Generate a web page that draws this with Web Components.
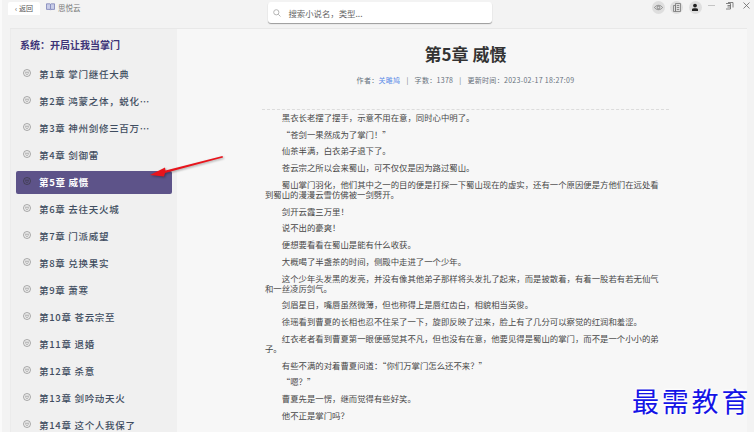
<!DOCTYPE html>
<html lang="zh-CN">
<head>
<meta charset="utf-8">
<title>思悦云</title>
<style>
  html, body { margin: 0; height: 432px; overflow: hidden; background: #f3f3f3; }
  body { font-family: "Noto Sans CJK SC", sans-serif; }
</style>
</head>
<body>
<reader-app>
  <top-bar slot="top"></top-bar>
  <chapter-list slot="side" heading="系统：开局让我当掌门">
    <chapter-item>第1章 掌门继任大典</chapter-item>
    <chapter-item>第2章 鸿蒙之体，蜕化成龙</chapter-item>
    <chapter-item>第3章 神州剑修三百万年前</chapter-item>
    <chapter-item>第4章 剑御雷</chapter-item>
    <chapter-item active>第5章 威慑</chapter-item>
    <chapter-item>第6章 去往天火城</chapter-item>
    <chapter-item>第7章 门派威望</chapter-item>
    <chapter-item>第8章 兑换果实</chapter-item>
    <chapter-item>第9章 萧寒</chapter-item>
    <chapter-item>第10章 苍云宗至</chapter-item>
    <chapter-item>第11章 退婚</chapter-item>
    <chapter-item>第12章 杀意</chapter-item>
    <chapter-item>第13章 剑吟动天火</chapter-item>
    <chapter-item>第14章 这个人我保了</chapter-item>
  </chapter-list>
  <novel-article slot="main" heading="第5章 威慑" author="关雎鸠" words="1378" updated="2023-02-17 18:27:09">
    <novel-para>黑衣长老摆了摆手，示意不用在意，同时心中明了。</novel-para>
    <novel-para>“苍剑一果然成为了掌门！”</novel-para>
    <novel-para>仙茶半满，白衣弟子退下了。</novel-para>
    <novel-para>苍云宗之所以会来蜀山，可不仅仅是因为路过蜀山。</novel-para>
    <novel-para>蜀山掌门羽化，他们其中之一的目的便是打探一下蜀山现在的虚实，还有一个原因便是方他们在远处看到蜀山的漫漫云雪仿佛被一剑劈开。</novel-para>
    <novel-para>剑开云霞三万里！</novel-para>
    <novel-para>说不出的豪爽！</novel-para>
    <novel-para>便想要看看在蜀山是能有什么收获。</novel-para>
    <novel-para>大概喝了半盏茶的时间，侧殿中走进了一个少年。</novel-para>
    <novel-para>这个少年头发黑的发亮，并没有像其他弟子那样将头发扎了起来，而是披散着，有着一股若有若无仙气和一丝凌厉剑气。</novel-para>
    <novel-para>剑眉星目，嘴唇虽然微薄，但也称得上是唇红齿白，相貌相当英俊。</novel-para>
    <novel-para>徐瑶看到曹夏的长相也忍不住呆了一下，旋即反映了过来，脸上有了几分可以察觉的红润和羞涩。</novel-para>
    <novel-para>红衣老者看到曹夏第一眼便感觉其不凡，但也没有在意，他要见得是蜀山的掌门，而不是一个小小的弟子。</novel-para>
    <novel-para>有些不满的对着曹夏问道：“你们万掌门怎么还不来？”</novel-para>
    <novel-para>“嗯？”</novel-para>
    <novel-para>曹夏先是一愣，继而觉得有些好笑。</novel-para>
    <novel-para>他不正是掌门吗？</novel-para>
  </novel-article>
  <red-arrow slot="over"></red-arrow>
  <water-mark slot="over">最需教育</water-mark>
</reader-app>

<script>
class ReaderApp extends HTMLElement {
  constructor() {
    super();
    this.attachShadow({ mode: "open" });
    this.shadowRoot.innerHTML = `
    <style>
      :host { display: block; position: relative; width: 754px; height: 432px; overflow: hidden;
        box-sizing: border-box; border-left: 2px solid #fafafa; }
      .main { display: flex; margin-left: 8px; width: 737px; height: 404px; border-top: 1px solid #e8e8e8; box-sizing: border-box; }
    </style>
    <slot name="top"></slot>
    <div class="main"><slot name="side"></slot><slot name="main"></slot></div>
    <slot name="over"></slot>`;
  }
}

class TopBar extends HTMLElement {
  constructor() {
    super();
    this.attachShadow({ mode: "open" });
    this.shadowRoot.innerHTML = `
    <style>
      :host { display: flex; align-items: flex-start; height: 28px; font-size: 8px; color: #666; }
      .back { flex: none; margin: 2px 0 0 6px; width: 32px; height: 13px; background: #fff; border-radius: 2px 2px 0 0;
        display: flex; align-items: center; justify-content: center; gap: 2px; font-size: 7px; line-height: 13px; color: #555; }
      .brand { flex: none; display: flex; align-items: center; gap: 3px; margin: 2px 0 0 6px; height: 10px; font-size: 7.500px; color: #777; white-space: nowrap; }
      .search { flex: none; margin: 2px 0 0 187px; width: 224px; height: 21px; box-sizing: border-box; background: #fff; border-radius: 3px;
        box-shadow: 0 1px 1px #9a9a9a; display: flex; align-items: center; padding-left: 5px; gap: 8px;
        font-size: 8.400px; color: #666; }
      .tools { flex: none; display: flex; align-items: center; margin: 1px 0 0 160px; }
      .round { flex: none; width: 13px; height: 13px; border-radius: 50%; background: #dedede; margin-right: 5.500px;
        display: flex; align-items: center; justify-content: center; }
      .win { flex: none; width: 9px; height: 9px; margin-left: 8px; display: block; align-self: flex-start; }
      .win:first-of-type { margin-left: 0; }
      .win.restore { margin-left: 9px; }
    </style>
    <div class="back"><span>‹</span><span>返回</span></div>
    <div class="brand">
      <svg width="9" height="8" viewBox="0 0 9 8"><path d="M.5.8h3.4l.6.5.6-.5h3.4v5.6H5l-.5.7-.5-.7H.5z" fill="#c9cde8" stroke="#6f76b0" stroke-width=".7"/><path d="M4.500 1.300v5" stroke="#6f76b0" stroke-width=".7"/></svg>
      <span>思悦云</span>
    </div>
    <div class="search">
      <svg width="8" height="8" viewBox="0 0 8 8" fill="none" stroke="#b5b5b5"><circle cx="3.300" cy="3.300" r="2.600"/><path d="M5.300 5.300 7.500 7.500"/></svg>
      <span>搜索小说名，类型...</span>
    </div>
    <div class="tools">
      <div class="round"><svg width="9" height="7" viewBox="0 0 9 7" fill="none" stroke="#777" stroke-width=".8"><path d="M.5 3.500C2.500.6 6.500.6 8.500 3.500 6.500 6.400 2.500 6.400.5 3.500z"/><circle cx="4.500" cy="3.500" r="1.300"/></svg></div>
      <div class="round"><svg width="8" height="9" viewBox="0 0 8 9" fill="none" stroke="#777" stroke-width=".8"><path d="M2.500.5h5v8h-5zM.5 2.500h2v6h-2zM3.800 2.500h2.400M3.800 4.500h2.400M3.800 6.500h2.400"/></svg></div>
      <div class="round"><svg width="8" height="9" viewBox="0 0 8 9" fill="#222"><circle cx="4" cy="2.600" r="1.900"/><path d="M1 6.200C1 5 7 5 7 6.200V8H1z"/></svg></div>
      <svg class="win" viewBox="0 0 9 9" stroke="#c4c4c4" fill="none"><path d="M1 4.500h7"/></svg>
      <svg class="win restore" viewBox="0 0 9 9" stroke="#666" fill="none" stroke-width=".8"><path d="M3 1.500h5v5M1 2.500h4.500v5.500H1M2.500 4.500h3M2.500 6h3"/></svg>
      <svg class="win" viewBox="0 0 9 9" stroke="#666" fill="none" stroke-width=".8"><path d="M1.500 1.500l6 6M7.500 1.500l-6 6"/></svg>
    </div>`;
  }
}

class ChapterList extends HTMLElement {
  constructor() {
    super();
    this.attachShadow({ mode: "open" });
    this.shadowRoot.innerHTML = `
    <style>
      :host { display: block; width: 167px; flex: none; background: #f0f0f0; border-left: 1px solid #ebebeb; box-sizing: border-box; }
      h2 { margin: 0; padding: 9px 0 0 9px; height: 22.500px; box-sizing: content-box; font-size: 10px; line-height: 14px;
        font-weight: 700; color: #3d3478; white-space: nowrap; }
    </style>
    <h2></h2>
    <slot></slot>`;
  }
  connectedCallback() {
    this.shadowRoot.querySelector("h2").textContent = this.getAttribute("heading");
  }
}

class ChapterItem extends HTMLElement {
  constructor() {
    super();
    this.attachShadow({ mode: "open" });
    this.shadowRoot.innerHTML = `
    <style>
      :host { display: block; padding: 2px 5px 2px 5px; }
      .bar { display: flex; align-items: center; gap: 8px; height: 23px; padding-left: 7px; border-radius: 2px;
        font-size: 9.500px; letter-spacing: .7px; font-weight: 500; color: #3f4d60; }
      svg { flex: none; margin-bottom: 3px; }
      .name { width: 112px; overflow: hidden; white-space: nowrap; text-overflow: ellipsis; }
      :host([active]) .bar { background: #5d5389; color: #fff; font-weight: 700; }
      :host([active]) svg { stroke: #333; }
    </style>
    <div class="bar">
      <svg width="8" height="8" viewBox="0 0 8 8" fill="none" stroke="#777" stroke-width=".6"><circle cx="4" cy="4" r="3.500"/><path d="M2 3.200h4M2.400 4.600c.8 1 2.400 1 3.200 0"/></svg>
      <span class="name"><slot></slot></span>
    </div>`;
  }
}

class NovelArticle extends HTMLElement {
  constructor() {
    super();
    this.attachShadow({ mode: "open" });
    this.shadowRoot.innerHTML = `
    <style>
      :host { display: block; flex: 1; background: #f7f7f7; padding-left: 85px; box-sizing: border-box; overflow: hidden; }
      .wrap { width: 407px; }
      h1 { margin: 0; padding-top: 15px; font-size: 17px; line-height: 20px; font-weight: 700; color: #333; text-align: center; }
      .meta { margin-top: 11px; height: 10px; font-size: 7px; line-height: 10px; letter-spacing: .3px; color: #66707c;
        display: flex; justify-content: center; gap: 6px; white-space: nowrap; }
      .meta a { color: #5b8be8; }
      .body { margin-top: 24px; border-top: 1px dashed #dcdcdc; padding: 2px 3px 0; }
    </style>
    <div class="wrap">
      <h1></h1>
      <div class="meta">
        <span>作者：<a class="author"></a></span><span>|</span>
        <span>字数：<span class="words"></span></span><span>|</span>
        <span>更新时间：<span class="updated"></span></span>
      </div>
      <div class="body"><slot></slot></div>
    </div>`;
  }
  connectedCallback() {
    const root = this.shadowRoot;
    root.querySelector("h1").textContent = this.getAttribute("heading");
    root.querySelector(".author").textContent = this.getAttribute("author");
    root.querySelector(".words").textContent = this.getAttribute("words");
    root.querySelector(".updated").textContent = this.getAttribute("updated");
  }
}

class NovelPara extends HTMLElement {
  constructor() {
    super();
    this.attachShadow({ mode: "open" });
    this.shadowRoot.innerHTML = `
    <style>
      :host { display: block; font-size: 8.400px; line-height: 10.200px; margin-bottom: 6.500px; text-indent: 2em; color: #484848; }
    </style>
    <slot></slot>`;
  }
}

class RedArrow extends HTMLElement {
  constructor() {
    super();
    this.attachShadow({ mode: "open" });
    this.shadowRoot.innerHTML = `
    <style>
      :host { position: absolute; left: 146px; top: 152px; width: 78px; height: 28px; }
      svg { display: block; filter: drop-shadow(1px 1px 1px rgba(0,0,0,.35)); }
    </style>
    <svg width="78" height="28" viewBox="0 0 78 28">
      <path d="M2 23 17 15.500 17.500 18.500 74.500 4 75 5.500 17 21 16 24.500z" fill="#e8141c"/>
    </svg>`;
  }
}

class WaterMark extends HTMLElement {
  constructor() {
    super();
    this.attachShadow({ mode: "open" });
    this.shadowRoot.innerHTML = `
    <style>
      :host { position: absolute; left: 630px; top: 383px; font-family: "Noto Sans CJK SC", serif; font-size: 27px; line-height: 36px;
        letter-spacing: 2.800px; font-weight: 400; color: #1414e6; white-space: nowrap;
        text-shadow: 0 0 2px #fff, 0 0 3px #fff, 1px 1px 2px #fff, -1px -1px 2px #fff; }
    </style>
    <slot></slot>`;
  }
}

customElements.define("reader-app", ReaderApp);
customElements.define("top-bar", TopBar);
customElements.define("chapter-list", ChapterList);
customElements.define("chapter-item", ChapterItem);
customElements.define("novel-article", NovelArticle);
customElements.define("novel-para", NovelPara);
customElements.define("red-arrow", RedArrow);
customElements.define("water-mark", WaterMark);
</script>
</body>
</html>
